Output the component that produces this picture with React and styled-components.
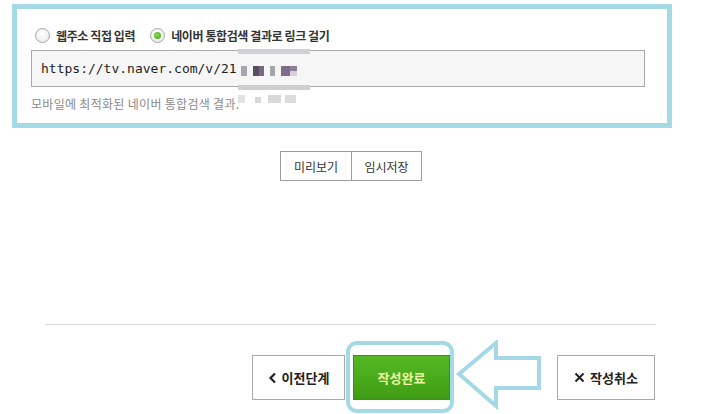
import styled, { createGlobalStyle } from "styled-components";

const GlobalStyle = createGlobalStyle`
  html, body {
    margin: 0;
    padding: 0;
    background: #fff;
  }
  body {
    font-family: "Noto Sans CJK KR", "Noto Sans", sans-serif;
    color: #333;
  }
`;

export default function App() {
  return (
    <Page>
      <GlobalStyle />
      <Highlight>
        <RadioRow>
          <RadioLabel>
            <Radio />
            웹주소 직접 입력
          </RadioLabel>
          <RadioLabel>
            <Radio checked />
            네이버 통합검색 결과로 링크 걸기
          </RadioLabel>
        </RadioRow>
        <UrlField>
          <UrlText>https://tv.naver.com/v/21</UrlText>
          <Mosaic />
        </UrlField>
        <Help>모바일에 최적화된 네이버 통합검색 결과.</Help>
      </Highlight>

      <ToolGroup>
        <ToolButton>미리보기</ToolButton>
        <ToolButton>임시저장</ToolButton>
      </ToolGroup>

      <Divider />

      <ActionRow>
        <ActionButton>
          <Chevron />
          이전단계
        </ActionButton>
        <SubmitWrap>
          <SubmitButton>작성완료</SubmitButton>
          <Ring />
        </SubmitWrap>
        <Arrow />
        <ActionButton $wide>
          <Cross />
          작성취소
        </ActionButton>
      </ActionRow>
    </Page>
  );
}

function Mosaic() {
  return (
    <MosaicSvg width="72" height="54" viewBox="0 0 72 54">
      <rect x="0" y="0" width="72" height="5" fill="#d0d0d2" />
      <rect x="3" y="17" width="6" height="10" fill="#a9a7ab" />
      <rect x="15" y="17" width="6" height="10" fill="#5a4d66" />
      <rect x="21" y="17" width="5" height="10" fill="#766a80" />
      <rect x="32" y="17" width="5" height="10" fill="#a6a4a8" />
      <rect x="43" y="17" width="9" height="10" fill="#7d6c8a" />
      <rect x="52" y="17" width="7" height="5" fill="#8d7d98" />
      <rect x="52" y="22" width="7" height="5" fill="#d7d2da" />
      <rect x="0" y="36" width="72" height="5" fill="#cfcfcf" />
      <rect x="0" y="46" width="7" height="8" fill="#e2e2e2" />
      <rect x="17" y="48" width="6" height="6" fill="#d8d8d8" />
      <rect x="30" y="46" width="13" height="8" fill="#d9d9d9" />
      <rect x="47" y="46" width="11" height="8" fill="#dcdcdc" />
    </MosaicSvg>
  );
}

function Chevron() {
  return (
    <svg width="9" height="12" viewBox="0 0 9 12">
      <path d="M7 1.5 L2.5 6 L7 10.5" fill="none" stroke="#222" strokeWidth="2.2" />
    </svg>
  );
}

function Cross() {
  return (
    <svg width="11" height="11" viewBox="0 0 11 11">
      <path d="M1.5 1.5 L9.5 9.5 M9.5 1.5 L1.5 9.5" fill="none" stroke="#222" strokeWidth="2" />
    </svg>
  );
}

function Arrow() {
  return (
    <ArrowSvg width="88" height="70" viewBox="0 0 88 70">
      <path
        d="M3 34 L40 3 L40 18 L83 18 L83 48 L40 48 L40 66 Z"
        fill="none"
        stroke="#a4d8e7"
        strokeWidth="4"
        strokeLinejoin="miter"
      />
    </ArrowSvg>
  );
}

const Page = styled.div`
  width: 706px;
  height: 414px;
  overflow: hidden;
  padding-top: 4px;
  box-sizing: border-box;
`;

const Highlight = styled.div`
  margin-left: 12px;
  width: 660px;
  height: 124px;
  box-sizing: border-box;
  border: 5px solid #a4d9e6;
  padding: 17px 0 0 14px;
  display: flex;
  flex-direction: column;
`;

const RadioRow = styled.div`
  display: flex;
  align-items: center;
  gap: 15px;
  padding-left: 4px;
  height: 18px;
`;

const RadioLabel = styled.label`
  display: flex;
  align-items: center;
  gap: 6px;
  font-size: 12px;
  font-weight: 700;
  color: #333;
  letter-spacing: -0.4px;
`;

const Radio = styled.span`
  width: 13px;
  height: 13px;
  border-radius: 50%;
  border: 1px solid #a8a8a8;
  background: radial-gradient(circle at 50% 40%, #fff 0%, #eee 70%, #ddd 100%);
  position: relative;
  flex: none;
  &::after {
    content: "";
    display: ${(p) => (p.checked ? "block" : "none")};
    position: absolute;
    left: 3px;
    top: 3px;
    width: 7px;
    height: 7px;
    border-radius: 50%;
    background: radial-gradient(circle at 45% 40%, #8fd659 0%, #4caf1c 80%);
  }
`;

const UrlField = styled.div`
  margin-top: 6px;
  width: 614px;
  height: 37px;
  box-sizing: border-box;
  border: 1px solid #a9a9a9;
  background: #f6f6f6;
  display: flex;
  align-items: center;
  padding-left: 9px;
  position: relative;
`;

const UrlText = styled.span`
  font-family: "DejaVu Sans Mono", "Liberation Mono", monospace;
  font-size: 13px;
  color: #1e1e1e;
`;

const MosaicSvg = styled.svg`
  position: absolute;
  left: 206px;
  top: -2px;
`;

const Help = styled.div`
  margin-top: 8px;
  font-size: 12px;
  color: #8a8a8a;
  letter-spacing: 0.3px;
`;

const ToolGroup = styled.div`
  margin: 23px 0 0 280px;
  display: flex;
  width: fit-content;
  border: 1px solid #9d9d9d;
`;

const ToolButton = styled.button`
  width: 70px;
  height: 28px;
  border: none;
  background: #fff;
  font-family: "Noto Sans CJK KR", sans-serif;
  font-size: 12px;
  color: #333;
  padding: 0;
  & + & {
    border-left: 1px solid #9d9d9d;
  }
`;

const Divider = styled.div`
  margin: 143px 0 0 45px;
  width: 611px;
  height: 1px;
  background: #dcdcdc;
`;

const ActionRow = styled.div`
  margin-top: 30px;
  padding-left: 252px;
  display: flex;
  align-items: flex-start;
`;

const ActionButton = styled.button`
  width: ${(p) => (p.$wide ? "98px" : "93px")};
  height: 45px;
  box-sizing: border-box;
  border: 1px solid #a9a9a9;
  background: #fff;
  display: flex;
  align-items: center;
  justify-content: center;
  gap: 5px;
  font-family: "Noto Sans CJK KR", sans-serif;
  font-size: 13px;
  font-weight: 700;
  color: #222;
  padding: 0;
  margin-left: ${(p) => (p.$wide ? "13px" : "0")};
`;

const SubmitWrap = styled.div`
  position: relative;
  margin-left: 8px;
`;

const SubmitButton = styled.button`
  width: 97px;
  height: 45px;
  box-sizing: border-box;
  border: 1px solid #3b8f14;
  background: linear-gradient(#55b824, #3f9d15);
  color: #eef7a4;
  font-family: "Noto Sans CJK KR", sans-serif;
  font-size: 13px;
  font-weight: 700;
  padding: 0;
`;

const Ring = styled.div`
  position: absolute;
  left: -7px;
  top: -14px;
  width: 108px;
  height: 72px;
  box-sizing: border-box;
  border: 4px solid #a4d9e6;
  border-radius: 11px;
`;

const ArrowSvg = styled.svg`
  margin: -15px 0 0 6px;
  flex: none;
`;
